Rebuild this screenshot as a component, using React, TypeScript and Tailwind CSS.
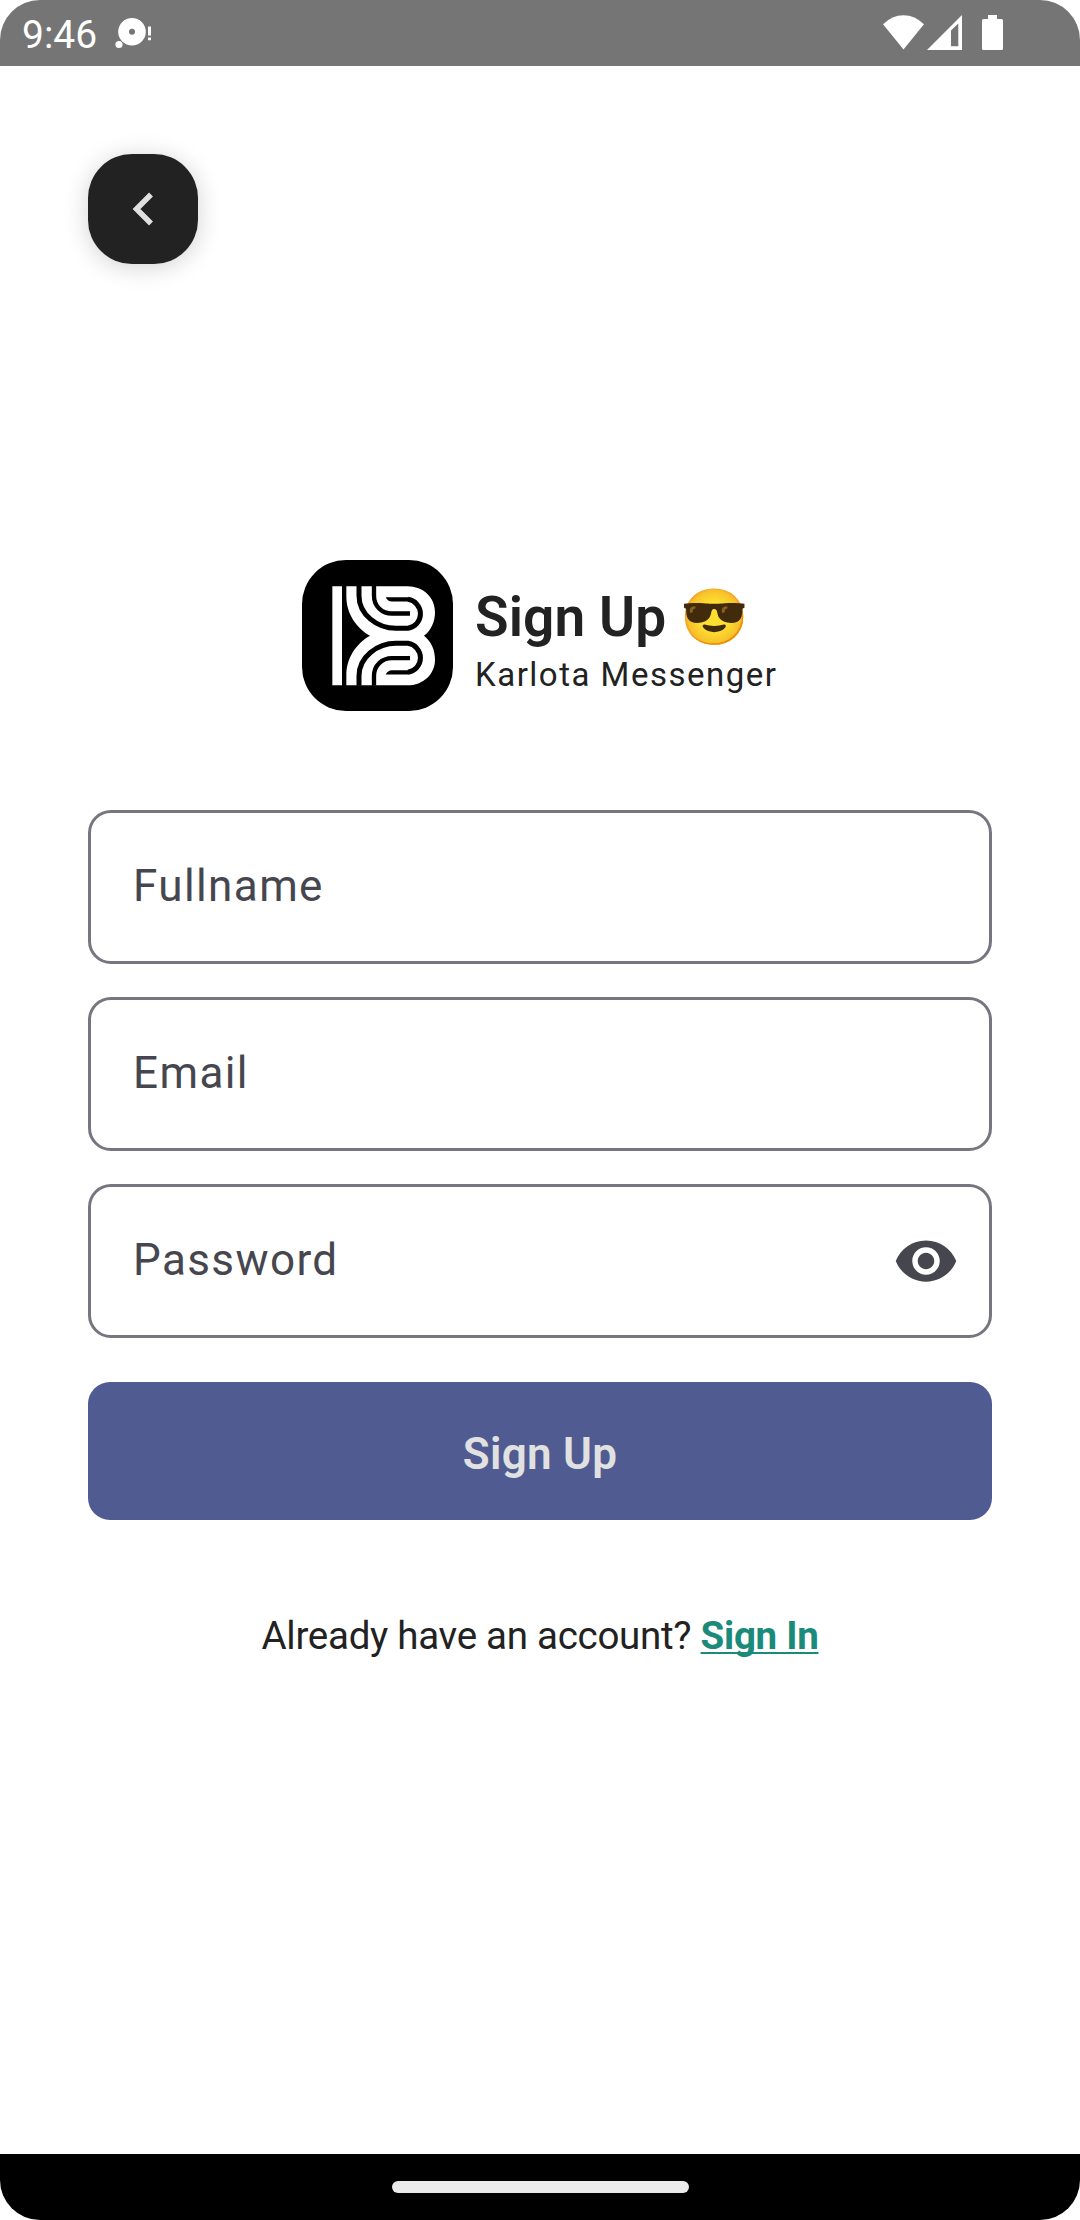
import React from "react";

function StatusBar() {
  return (
    <header className="flex h-[66px] shrink-0 items-start bg-[#757575] text-white">
      <span className="ml-[22px] mt-[12px] w-[76px] whitespace-nowrap text-[39px] leading-[46px]">9:46</span>
      <svg className="ml-[16px] mt-[16px] h-[34px] w-[40px]" viewBox="0 0 40 34" fill="currentColor">
        <path fillRule="evenodd" d="M18 2a13.8 13.8 0 1 1 0 27.6a13.8 13.8 0 1 1 0-27.6zm0 10.8a3 3 0 1 0 0 6a3 3 0 1 0 0-6z" />
        <circle cx="5" cy="28.500" r="3.600" />
        <path d="M34 10.500h3v9h-3zM34 21.500h3v2.700h-3z" />
      </svg>
      <svg className="ml-auto mt-[15px] h-[35px] w-[41px]" viewBox="0 0 41 35" fill="currentColor">
        <path d="M0 9.300Q9 0.200 20.500 0.200T41 9.300L20.500 34.500z" />
      </svg>
      <svg className="ml-[3px] mt-[15px] h-[35px] w-[35px]" viewBox="0 0 35 35" fill="currentColor">
        <path fillRule="evenodd" d="M0 35L35 0V35zM24 15.500V31.300h7.300V8.500z" />
      </svg>
      <svg className="ml-[20px] mr-[77px] mt-[15px] h-[35px] w-[21px]" viewBox="0 0 21 35" fill="currentColor">
        <path d="M6 0h9v4h4.500q1.500 0 1.500 1.500v28q0 1.500-1.500 1.500h-18Q0 35 0 33.500v-28Q0 4 1.500 4H6z" />
      </svg>
    </header>
  );
}

function Logo() {
  return (
    <svg className="h-[151px] w-[151px] rounded-[44px]" viewBox="36 30 453 453">
      <rect x="36" y="30" width="453" height="453" fill="#000" />
      <path fill="#fff" d="M127 109h29v297h-29z" />
      <path
        fill="#fff"
        d="M169 109H352C400 109 435 143 435 186C435 216 423 241 402 257.500C423 274 435 299 435 329C435 372 400 406 352 406H169V376C169 326 197 282 240 257.500C197 233 169 189 169 139z"
      />
      <g fill="none" stroke="#000" strokeWidth="15">
        <path d="M207 108V137C207 194 262 235 318 235H354A44 44 0 0 0 354 148" />
        <path d="M207 407V378C207 321 262 280 318 280H354A44 44 0 0 1 354 367" />
      </g>
      <g fill="none" stroke="#000" strokeWidth="13">
        <path d="M252 108V137C252 169 276 190.500 306 190.500H360" />
        <path d="M252 407V378C252 346 276 324.500 306 324.500H360" />
      </g>
      <path d="M287 141.500H356V154.500H306Q293 154 287 141.500zM287 373.500H356V360.500H306Q293 361 287 373.500z" />
    </svg>
  );
}

function Field({ label, icon }: { label: string; icon?: React.ReactNode }) {
  return (
    <div className="flex h-[154px] items-center justify-between rounded-[23px] border-[3px] border-[#767680] pl-[42px] pr-[30px]">
      <span className="-mt-[3px] text-[44px] leading-[60px] tracking-[1.4px] text-[#46464f]">{label}</span>
      {icon}
    </div>
  );
}

function EyeIcon() {
  return (
    <svg className="h-[66px] w-[66px]" viewBox="0 0 24 24" fill="#46464f">
      <path d="M12 4.500C7 4.500 2.730 7.610 1 12c1.730 4.390 6 7.500 11 7.500s9.270-3.110 11-7.500c-1.730-4.390-6-7.500-11-7.500zM12 17c-2.760 0-5-2.240-5-5s2.240-5 5-5 5 2.240 5 5-2.240 5-5 5zm0-8c-1.660 0-3 1.340-3 3s1.340 3 3 3 3-1.340 3-3-1.340-3-3-3z" />
    </svg>
  );
}

export default function App() {
  return (
    <div className="h-[2220px] w-[1080px] bg-white">
      <div className="flex h-full flex-col overflow-hidden rounded-[40px] bg-white font-['Roboto',sans-serif] text-[#222222]">
        <StatusBar />
        <main className="flex flex-1 flex-col px-[88px] pt-[88px]">
          <button className="flex h-[110px] w-[110px] items-center justify-center rounded-[44px] bg-[#222222] shadow-[0_3px_24px_rgba(0,0,0,0.18)]">
            <svg className="h-[34px] w-[22px]" viewBox="0 0 22 34">
              <path d="M19 2.500L4.500 17L19 31.500" fill="none" stroke="#e1dfe1" strokeWidth="5.500" />
            </svg>
          </button>

          <section className="ml-[214px] mt-[296px] flex h-[151px] items-center">
            <Logo />
            <div className="ml-[22px] flex flex-col pt-[10px]">
              <h1 className="flex whitespace-pre text-[55px] font-semibold leading-[64px] tracking-[0.1px]">Sign Up 😎</h1>
              <p className="mt-[4px] whitespace-nowrap text-[33px] leading-[44px] tracking-[1.5px]">Karlota Messenger</p>
            </div>
          </section>

          <form className="mt-[99px] flex flex-col gap-[33px]">
            <Field label="Fullname" />
            <Field label="Email" />
            <Field label="Password" icon={<EyeIcon />} />
            <button type="button" className="mt-[11px] flex h-[138px] items-center justify-center rounded-[22px] bg-[#505b92] pt-[5px] text-[44px] font-semibold leading-[60px] tracking-[0.28px] text-[#e1e1e1]">
              Sign Up
            </button>
          </form>

          <p className="mt-[89px] whitespace-nowrap text-center text-[38.5px] leading-[54px] tracking-[-0.28px]">
            Already have an account?{" "}
            <a className="font-bold text-[#1a8a7a] underline decoration-2 underline-offset-[3px] [text-decoration-skip-ink:none]">Sign In</a>
          </p>
        </main>
        <footer className="flex h-[66px] shrink-0 items-start justify-center bg-black pt-[27px]">
          <div className="h-[12px] w-[297px] rounded-full bg-[#ebebeb]" />
        </footer>
      </div>
    </div>
  );
}
